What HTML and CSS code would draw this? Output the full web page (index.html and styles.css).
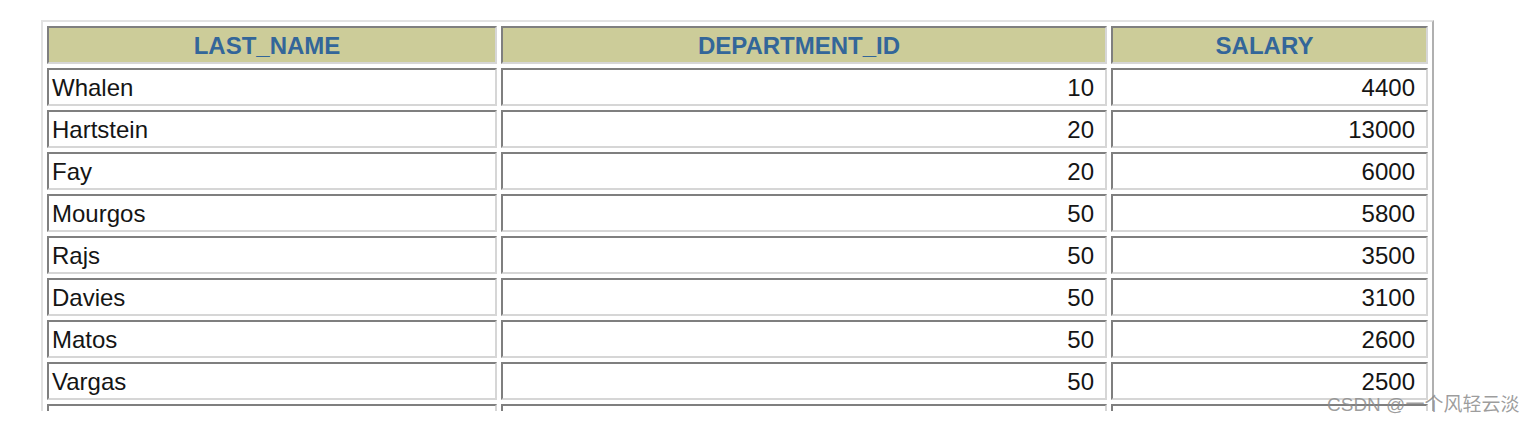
FILE: index.html
```html
<!DOCTYPE html>
<html>
<head>
<meta charset="utf-8">
<link rel="stylesheet" href="styles.css">
</head>
<body>
<div class="page">
  <div class="clip">
    <table class="grid">
      <thead>
        <tr><th class="c1">LAST_NAME</th><th class="c2">DEPARTMENT_ID</th><th class="c3">SALARY</th></tr>
      </thead>
      <tbody>
        <tr><td>Whalen</td><td class="num">10</td><td class="num">4400</td></tr>
        <tr><td>Hartstein</td><td class="num">20</td><td class="num">13000</td></tr>
        <tr><td>Fay</td><td class="num">20</td><td class="num">6000</td></tr>
        <tr><td>Mourgos</td><td class="num">50</td><td class="num">5800</td></tr>
        <tr><td>Rajs</td><td class="num">50</td><td class="num">3500</td></tr>
        <tr><td>Davies</td><td class="num">50</td><td class="num">3100</td></tr>
        <tr><td>Matos</td><td class="num">50</td><td class="num">2600</td></tr>
        <tr><td>Vargas</td><td class="num">50</td><td class="num">2500</td></tr>
        <tr><td>&nbsp;</td><td class="num">&nbsp;</td><td class="num">&nbsp;</td></tr>
      </tbody>
    </table>
  </div>
  <div class="watermark">CSDN @一个风轻云淡</div>
</div>
</body>
</html>
```
FILE: styles.css
```css
html, body {
  margin: 0;
  padding: 0;
  background: #ffffff;
}
.page {
  position: relative;
  width: 1533px;
  height: 422px;
  background: #ffffff;
}
.clip {
  height: 411px;
  overflow: hidden;
  padding: 20px 0 0 42px;
  box-sizing: border-box;
}
.grid {
  border-collapse: separate;
  border-spacing: 4px;
  border: 2px solid;
  border-color: #e2e2e2 #b0b0b0 #b0b0b0 #e2e2e2;
  margin-left: -1px;
  font-family: "Liberation Sans", Arial, sans-serif;
  font-size: 24px;
  color: #151515;
}
.grid th, .grid td {
  box-sizing: border-box;
  height: 38px;
  padding: 1px 11px 0 3px;
  border: 2px solid;
  border-color: #7f7f7f #d6d6d6 #d6d6d6 #7f7f7f;
  white-space: nowrap;
  line-height: 33px;
}
.grid th {
  background: #cccc99;
  color: #336699;
  font-weight: bold;
  text-align: center;
  padding: 1px 10px 0 0;
}
.c1 { width: 450px; }
.c2 { width: 606px; }
.c3 { width: 317px; }
.grid td.num {
  text-align: right;
}
.watermark {
  position: absolute;
  left: 1327px;
  top: 389px;
  font-family: "Liberation Sans", "Noto Sans CJK SC", sans-serif;
  font-size: 19px;
  color: rgba(140, 140, 140, 0.85);
  white-space: nowrap;
}
```
